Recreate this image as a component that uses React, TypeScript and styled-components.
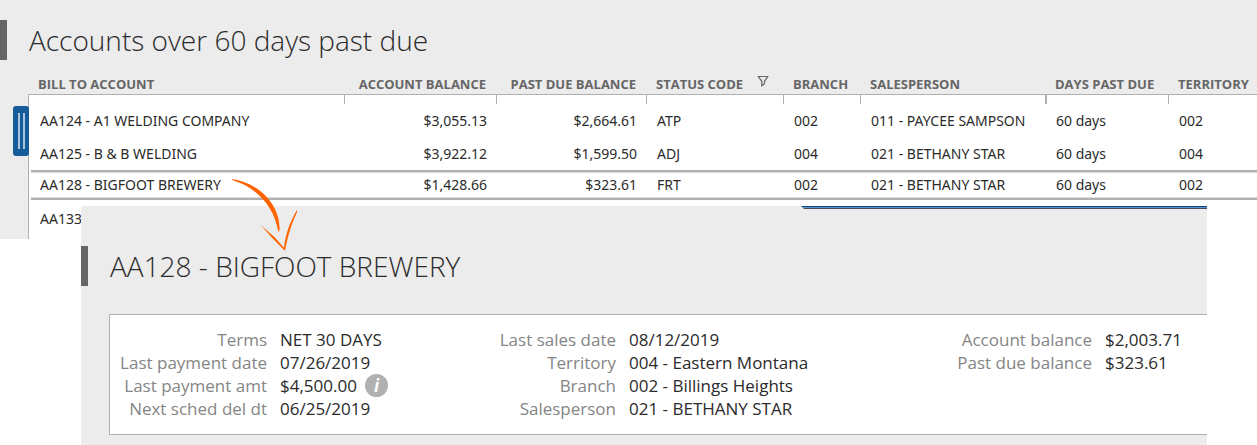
import React from "react";
import styled, { createGlobalStyle, css } from "styled-components";

const GlobalStyle = createGlobalStyle`
  *, *::before, *::after { box-sizing: border-box; }
  body {
    margin: 0;
    background: #fff;
    color: #2b2b2b;
    font-family: "Open Sans", "Noto Sans", sans-serif;
    overflow-x: hidden;
  }
`;

const rule = "#b0b0b0";

const ListPanel = styled.section`
  background: #ececec;
  padding: 20px 0 0 28px;
`;

const Heading = styled.header`
  display: flex;
  align-items: center;
  height: 40px;
  margin-left: -28px;
  padding-left: 22px;
  border-left: 7px solid #666;
`;

const Title = styled.h1`
  margin: 0;
  font-size: 28px;
  line-height: 40px;
  font-weight: 300;
  white-space: nowrap;
`;

const TableFrame = styled.div`
  position: relative;
  padding-top: 13px;
`;

const Table = styled.table`
  width: 100%;
  table-layout: fixed;
  border-collapse: separate;
  border-spacing: 0;
  font-family: "Noto Sans", "Open Sans", sans-serif;
`;

const Col = styled.col<{ $width?: number }>`
  width: ${(p) => (p.$width ? `${p.$width}px` : "auto")};
`;

const HeadCell = styled.th<{ $right?: boolean }>`
  height: 22px;
  padding: 0 10px;
  border-bottom: 1px solid ${rule};
  color: #666;
  font-family: "Open Sans", sans-serif;
  font-size: 13px;
  line-height: 20px;
  font-weight: 700;
  text-align: ${(p) => (p.$right ? "right" : "left")};
  white-space: nowrap;
`;

const HeadLabel = styled.span`
  display: flex;
  align-items: center;
  gap: 14px;
`;

const FilterButton = styled.button`
  display: flex;
  padding: 0 0 6px;
  border: 0;
  background: none;
  color: #666;
`;

const Cell = styled.td<{ $right?: boolean }>`
  height: 33px;
  padding: 0 9px 0 11px;
  background-color: #fff;
  background-repeat: no-repeat;
  font-size: 14px;
  line-height: 20px;
  text-align: ${(p) => (p.$right ? "right" : "left")};
  white-space: nowrap;
  &:first-child { border-left: 1px solid ${rule}; }
`;

const Row = styled.tr<{ $kind: "first" | "plain" | "selected" | "last" }>`
  ${(p) => p.$kind === "first" && css`
    ${Cell} { height: 42px; padding-top: 9px; }
    ${Cell}:not(:first-child) {
      background-image: linear-gradient(${rule}, ${rule});
      background-size: 1px 9px;
    }
    ${Cell}:nth-child(7) { background-size: 2px 9px; }
  `}
  ${(p) => p.$kind === "selected" && css`
    ${Cell} {
      height: 30px;
      background-image: linear-gradient(${rule} 67%, #ddd 67%), linear-gradient(#ddd 33%, ${rule} 33%);
      background-size: 100% 3px;
      background-position: 0 0, 0 100%;
    }
    ${Cell}:first-child { background-position: 2px 0, 2px 100%; }
  `}
  ${(p) => p.$kind === "last" && css`
    ${Cell} { height: 39px; padding-bottom: 2px; }
  `}
`;

const Handle = styled.button`
  position: absolute;
  left: -15px;
  top: 46px;
  display: flex;
  justify-content: center;
  gap: 3px;
  width: 16px;
  height: 50px;
  padding: 7px 0;
  border: 0;
  border-radius: 3px;
  background: #165c9b;
`;

const Grip = styled.span`
  width: 2px;
  height: 36px;
  background: #a9c6df;
`;

const DetailPanel = styled.section`
  position: relative;
  margin: -33px 50px 0 81px;
  padding: 40px 0 10px 28px;
  background: #ececec;
`;

const TopEdge = styled.svg`
  position: absolute;
  top: 0;
  right: 0;
  width: 406px;
  height: 3px;
`;

const Arrow = styled.svg`
  position: absolute;
  top: -28px;
  left: 149px;
  width: 70px;
  height: 73px;
`;

const Card = styled.div`
  display: grid;
  grid-template-columns: 349fr 476fr 272fr;
  margin-top: 28px;
  padding: 13px 0 14px;
  border: 1px solid ${rule};
  border-right: 0;
  background: #fff;
`;

const Fields = styled.dl`
  display: grid;
  grid-template-columns: 157px max-content;
  grid-auto-rows: 23px;
  align-content: start;
  column-gap: 13px;
  margin: 0;
  font-size: 17px;
  line-height: 23px;
  white-space: nowrap;
`;

const Term = styled.dt`
  color: #858585;
  text-align: right;
`;

const Value = styled.dd`
  display: flex;
  align-items: center;
  gap: 8px;
  margin: 0;
`;

const InfoButton = styled.button`
  width: 23px;
  height: 23px;
  padding: 0;
  border: 0;
  border-radius: 50%;
  background: #b0b0b0;
  color: #fff;
  font: italic 700 17px/22px "Noto Sans", sans-serif;
`;

const columns = [
  { name: "BILL TO ACCOUNT" },
  { name: "ACCOUNT BALANCE", width: 152, right: true },
  { name: "PAST DUE BALANCE", width: 150, right: true },
  { name: "STATUS CODE", width: 137, filter: true },
  { name: "BRANCH", width: 77 },
  { name: "SALESPERSON", width: 185 },
  { name: "DAYS PAST DUE", width: 123 },
  { name: "TERRITORY", width: 89 },
];

const rows = [
  { kind: "first", cells: ["AA124 - A1 WELDING COMPANY", "$3,055.13", "$2,664.61", "ATP", "002", "011 - PAYCEE SAMPSON", "60 days", "002"] },
  { kind: "plain", cells: ["AA125 - B & B WELDING", "$3,922.12", "$1,599.50", "ADJ", "004", "021 - BETHANY STAR", "60 days", "004"] },
  { kind: "selected", cells: ["AA128 - BIGFOOT BREWERY", "$1,428.66", "$323.61", "FRT", "002", "021 - BETHANY STAR", "60 days", "002"] },
  { kind: "last", cells: ["AA133", "", "", "", "", "", "", ""] },
] as const;

const groups = [
  [
    ["Terms", "NET 30 DAYS"],
    ["Last payment date", "07/26/2019"],
    ["Last payment amt", "$4,500.00"],
    ["Next sched del dt", "06/25/2019"],
  ],
  [
    ["Last sales date", "08/12/2019"],
    ["Territory", "004 - Eastern Montana"],
    ["Branch", "002 - Billings Heights"],
    ["Salesperson", "021 - BETHANY STAR"],
  ],
  [
    ["Account balance", "$2,003.71"],
    ["Past due balance", "$323.61"],
  ],
];

export default function App() {
  return (
    <main>
      <GlobalStyle />
      <ListPanel>
        <Heading>
          <Title>Accounts over 60 days past due</Title>
        </Heading>
        <TableFrame>
          <Table>
            <colgroup>
              {columns.map((c) => <Col key={c.name} $width={c.width} />)}
            </colgroup>
            <thead>
              <tr>
                {columns.map((c) => (
                  <HeadCell key={c.name} scope="col" $right={c.right}>
                    {c.filter ? (
                      <HeadLabel>
                        {c.name}
                        <FilterButton type="button" aria-label="Filter status code">
                          <svg width="12" height="12" viewBox="0 0 12 12" fill="none" stroke="currentColor">
                            <path d="M1.3 1.5h9.4L7.5 6.3v2.3L4.8 10.8V6.3z" strokeWidth="1.2" />
                          </svg>
                        </FilterButton>
                      </HeadLabel>
                    ) : c.name}
                  </HeadCell>
                ))}
              </tr>
            </thead>
            <tbody>
              {rows.map((r) => (
                <Row key={r.cells[0]} $kind={r.kind}>
                  {r.cells.map((text, i) => (
                    <Cell key={columns[i].name} $right={columns[i].right}>{text}</Cell>
                  ))}
                </Row>
              ))}
            </tbody>
          </Table>
          <Handle type="button" aria-label="Resize panel">
            <Grip />
            <Grip />
          </Handle>
        </TableFrame>
      </ListPanel>

      <DetailPanel>
        <TopEdge viewBox="0 0 406 3" aria-hidden="true">
          <path d="M0 0h406v1H1z" fill="#0c458a" />
          <path d="M1 1h405v1H2z" fill="#5f93c6" />
          <path d="M2 2h404v1H3z" fill="#454f5c" />
        </TopEdge>
        <Heading>
          <Title as="h2">AA128 - BIGFOOT BREWERY</Title>
        </Heading>
        <Card>
          {groups.map((fields) => (
            <Fields key={fields[0][0]}>
              {fields.map(([term, value]) => (
                <React.Fragment key={term}>
                  <Term>{term}</Term>
                  <Value>
                    {value}
                    {term === "Last payment amt" && (
                      <InfoButton type="button" aria-label="Payment information">i</InfoButton>
                    )}
                  </Value>
                </React.Fragment>
              ))}
            </Fields>
          ))}
        </Card>
        <Arrow viewBox="30 24 210 219" fill="#ff6200" aria-hidden="true">
          <path d="M34 27C98 34 177 87 179 176L177 187L174 181C161 109 111 53 38 31Z" />
          <path d="M121 164L164 202L192 233C196 195 210 154 231 120L231 127C216 158 204 194 195 242L189 237L159 206Z" />
        </Arrow>
      </DetailPanel>
    </main>
  );
}
